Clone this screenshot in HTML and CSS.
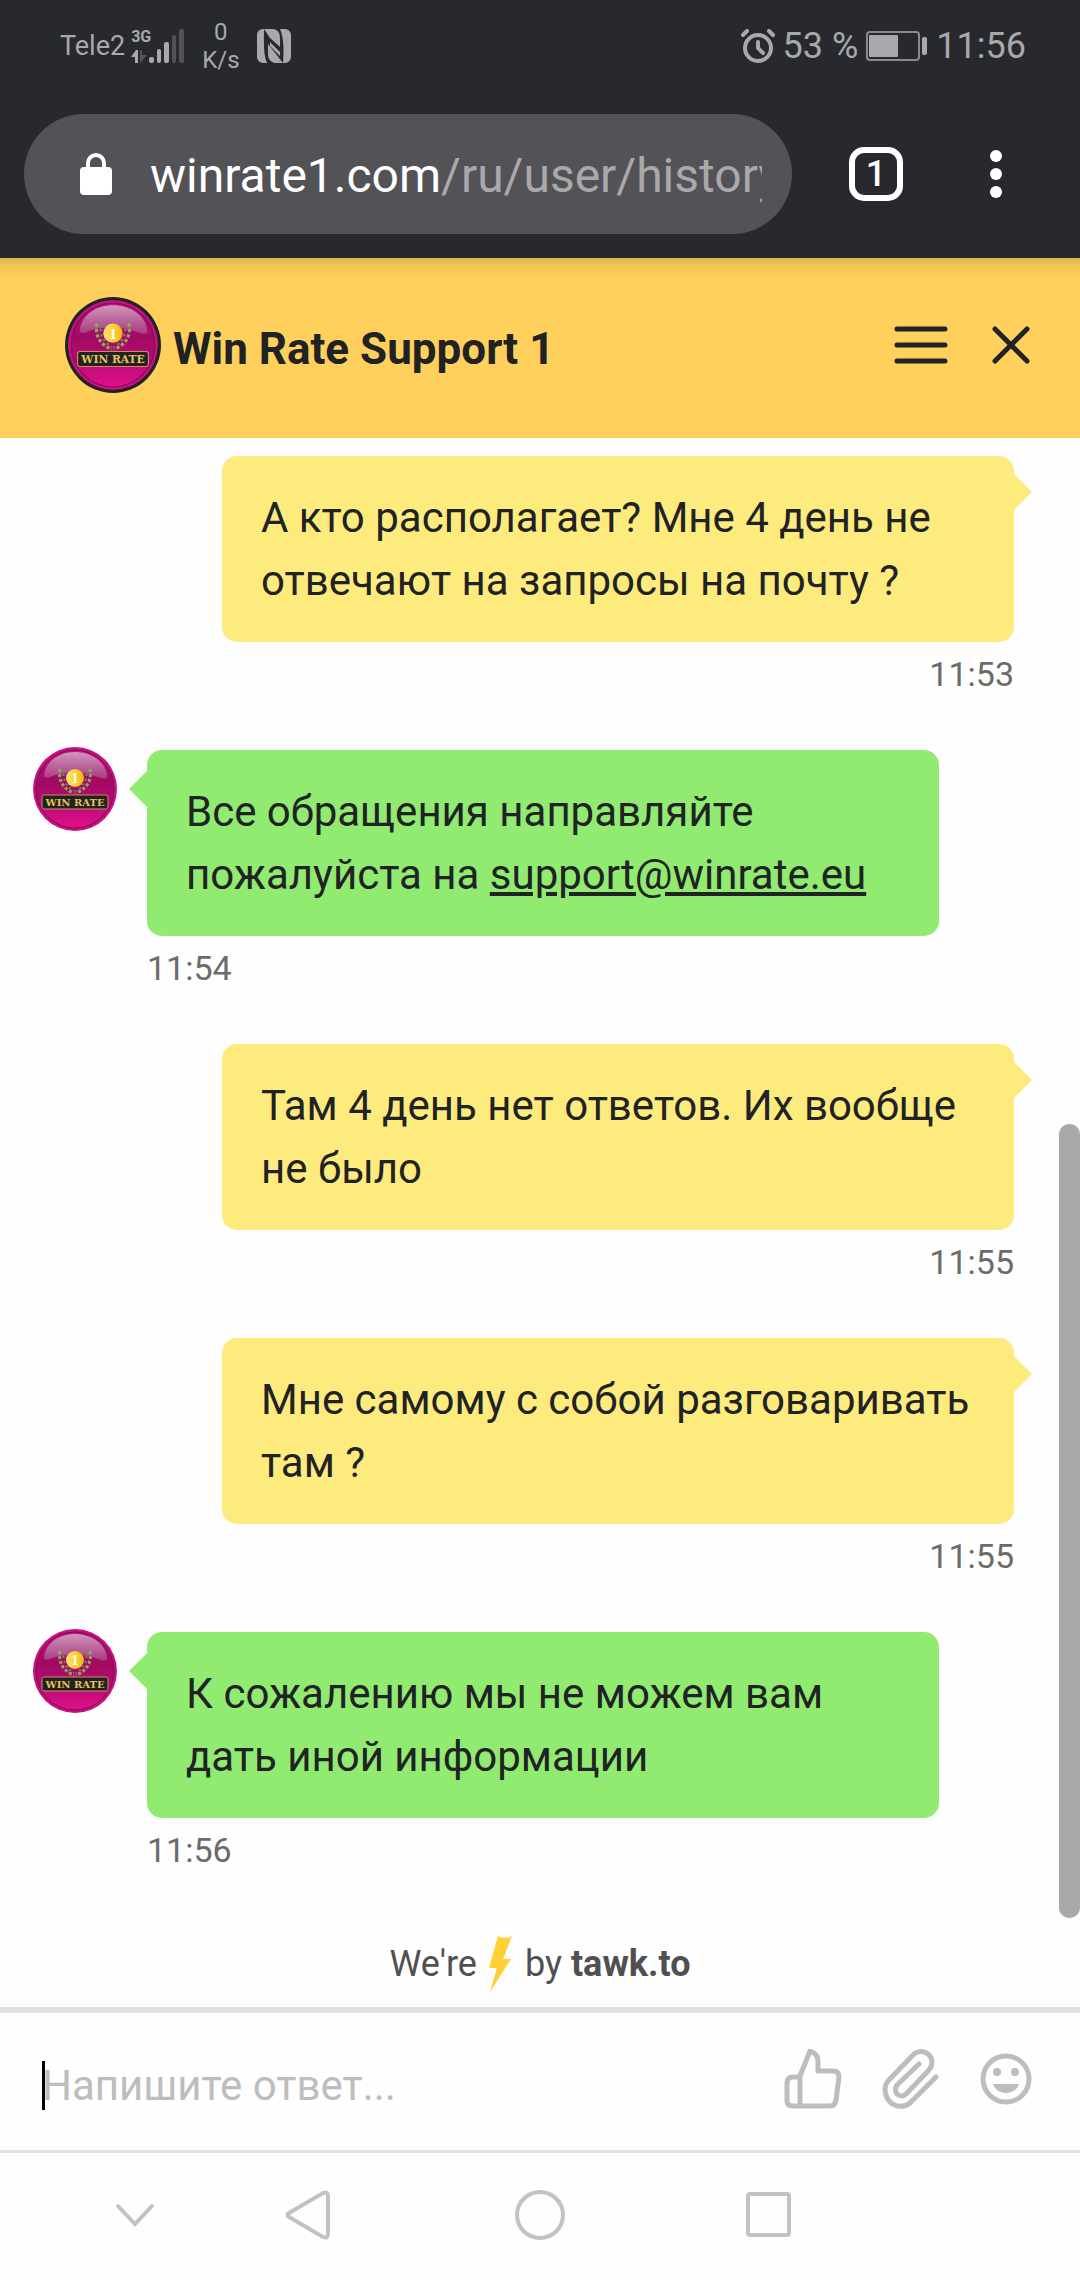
FILE: index.html
```html
<!DOCTYPE html>
<html lang="ru">
  <head>
    <meta charset="UTF-8">
    <meta name="viewport" content="width=device-width, initial-scale=1.0">
    <title>Win Rate Support 1</title>
    <link rel="stylesheet" href="styles.css">
  </head>
  <body>
    <!-- shared logo -->
    <svg class="defs" aria-hidden="true">
      <defs>
        <linearGradient id="pink" x1="0" y1="0" x2="0" y2="1">
          <stop offset="0" stop-color="#c2127f"/>
          <stop offset="0.4" stop-color="#a00a63"/>
          <stop offset="0.7" stop-color="#b80b74"/>
          <stop offset="1" stop-color="#e30f8c"/>
        </linearGradient>
        <linearGradient id="shine" x1="0" y1="0" x2="0" y2="1">
          <stop offset="0" stop-color="#cf95bb"/>
          <stop offset="1" stop-color="#a93b80"/>
        </linearGradient>
        <linearGradient id="gold" x1="0" y1="0" x2="1" y2="0">
          <stop offset="0" stop-color="#fbe27a"/>
          <stop offset="0.5" stop-color="#fcd62e"/>
          <stop offset="1" stop-color="#efb21c"/>
        </linearGradient>
        <symbol id="logo" viewBox="0 0 84 84">
          <circle cx="42" cy="42" r="42" fill="#c5107f"/>
          <circle cx="42" cy="42" r="39" fill="url(#pink)" stroke="#7d0a50" stroke-width="1"/>
          <path d="M11 28C13 14 26 5 42 5s30 9 32 23c1 4-3 4-6 3-9-3-15-5-26-5s-18 1-25 4c-3 1-6 1-6-2z" fill="url(#shine)"/>
          <g fill="none" stroke="#8dab5c" stroke-width="3" stroke-dasharray="3 2">
            <path d="M27 22c-2 11 3 20 14 24"/>
            <path d="M57 22c2 11-3 20-14 24"/>
          </g>
          <g fill="none" stroke="#6d9455" stroke-width="2" stroke-dasharray="2 3">
            <path d="M31 22c-2 10 2 17 10 22"/>
            <path d="M53 22c2 10-2 17-10 22"/>
          </g>
          <circle cx="42" cy="31" r="9" fill="url(#gold)"/>
          <text x="42" y="36" text-anchor="middle" class="logonum">1</text>
          <rect x="9" y="48" width="66" height="14" rx="2" fill="#222220" stroke="#d48a63" stroke-width="1"/>
          <text x="42" y="59" text-anchor="middle" class="logoname">WIN RATE</text>
        </symbol>
      </defs>
    </svg>

    <div class="phone">
      <div class="statusbar">
        <div class="statusleft">
          <span class="carrier">Tele2</span>
          <div class="signal">
            <span class="network">3G</span>
            <svg width="54" height="34" viewBox="0 0 54 34">
              <path d="M0 28l5-7h2v13H4v-6z" fill="#a9a9ac"/>
              <path d="M9 21h2v5h5l-5 6-2 2z" fill="#535359"/>
              <g fill="#a9a9ac">
                <rect x="18" y="28" width="5" height="6" rx="2"/>
                <rect x="26" y="20" width="4" height="14" rx="2"/>
                <rect x="33" y="13" width="5" height="21" rx="2"/>
              </g>
              <g fill="#515156">
                <rect x="41" y="6" width="4" height="28" rx="2"/>
                <rect x="48" y="0" width="5" height="34" rx="2"/>
              </g>
            </svg>
          </div>
          <div class="speed">0<br>K/s</div>
          <svg width="34" height="34" viewBox="0 0 34 34">
            <path d="M6 0H7C7 10 6 25 10 34H6a6 6 0 0 1-6-6V6a6 6 0 0 1 6-6z" fill="#a9a9ac"/>
            <path d="M7 0h9c6 1 7 5 7 10v8L13 9zM11 15l15 19h-8c-5-1-7-5-7-9zM13 13l10 10v4L13 17z" fill="#a9a9ac"/>
            <path d="M23 0h5a6 6 0 0 1 6 6v22a6 6 0 0 1-6 6h-2C27 23 27 9 23 0z" fill="#a9a9ac"/>
          </svg>
        </div>
        <div class="statusright">
          <svg width="34" height="34" viewBox="0 0 34 34" fill="none" stroke="#a9a9ac" stroke-width="4" stroke-linecap="round">
            <circle cx="17" cy="19" r="13"/>
            <path d="M17 13v6l5 5M2 6l4-4M32 6l-4-4"/>
          </svg>
          <span>53 %</span>
          <svg class="battery" width="62" height="30" viewBox="0 0 62 30">
            <rect x="1" y="1" width="52" height="28" rx="3" fill="none" stroke="#8b8b8e" stroke-width="2"/>
            <rect x="3" y="4" width="29" height="22" rx="1" fill="#a9a9ac"/>
            <rect x="56" y="6" width="5" height="18" rx="2" fill="#a9a9ac"/>
          </svg>
          <span>11:56</span>
        </div>
      </div>

      <div class="browserbar">
        <div class="address">
          <svg width="32" height="42" viewBox="0 0 32 42">
            <path d="M8 16V10a8 8 0 0 1 16 0v6" fill="none" stroke="#fff" stroke-width="4"/>
            <rect x="0" y="14" width="32" height="28" rx="4" fill="#fff"/>
          </svg>
          <div class="url">winrate1.com<span class="path">/ru/user/history</span></div>
        </div>
        <button class="tabs" type="button" aria-label="Tabs">1</button>
        <button class="dots" type="button" aria-label="More">
          <svg width="12" height="48" viewBox="0 0 12 48" fill="#fff">
            <circle cx="6" cy="6" r="6"/>
            <circle cx="6" cy="24" r="6"/>
            <circle cx="6" cy="42" r="6"/>
          </svg>
        </button>
      </div>

      <div class="header">
        <svg class="headerlogo"><use href="#logo"/></svg>
        <h1 class="title">Win Rate Support 1</h1>
        <button class="iconbutton" type="button" aria-label="Menu">
          <svg width="54" height="38" viewBox="0 0 54 38" stroke="#212224" stroke-width="5" stroke-linecap="round">
            <path d="M3 3h48M3 19h48M3 35h48"/>
          </svg>
        </button>
        <button class="iconbutton" type="button" aria-label="Close">
          <svg width="38" height="38" viewBox="0 0 38 38" stroke="#212224" stroke-width="5" stroke-linecap="round">
            <path d="M3 3l32 32M35 3L3 35"/>
          </svg>
        </button>
      </div>

      <div class="chat">
        <div class="message mine">
          <div class="bubble">А кто располагает? Мне 4 день не отвечают на запросы на почту ?</div>
          <div class="time">11:53</div>
        </div>
        <div class="message theirs">
          <svg class="avatar"><use href="#logo"/></svg>
          <div class="bubble">Все обращения направляйте пожалуйста на <a href="mailto:support@winrate.eu">support@winrate.eu</a></div>
          <div class="time">11:54</div>
        </div>
        <div class="message mine">
          <div class="bubble">Там 4 день нет ответов. Их вообще не было</div>
          <div class="time">11:55</div>
        </div>
        <div class="message mine">
          <div class="bubble">Мне самому с собой разговаривать там ?</div>
          <div class="time">11:55</div>
        </div>
        <div class="message theirs">
          <svg class="avatar"><use href="#logo"/></svg>
          <div class="bubble">К сожалению мы не можем вам дать иной информации</div>
          <div class="time">11:56</div>
        </div>
        <div class="scrollbar"></div>
      </div>

      <div class="powered">
        <span>We're</span>
        <svg width="24" height="56" viewBox="0 0 24 56">
          <path d="M9 0q6 4 14 0l-9 23h8L1 56l7-24H0z" fill="#ffcf33"/>
        </svg>
        <span>by <b>tawk.to</b></span>
      </div>

      <div class="reply">
        <div class="field">
          <input type="text" placeholder="Напишите ответ..." aria-label="Напишите ответ">
          <span class="caret"></span>
        </div>
        <button class="iconbutton" type="button" aria-label="Like">
          <svg width="58" height="60" viewBox="0 0 58 60" fill="none" stroke="#bdbdbd" stroke-width="5" stroke-linejoin="round">
            <path d="M16 28H9q-6 0-6 6v18q0 5 6 5h37q5 0 6-6l3-23q0-6-6-6H34V12q0-7-8-10L16 27v30"/>
          </svg>
        </button>
        <button class="iconbutton" type="button" aria-label="Attach">
          <svg width="58" height="60" viewBox="0 0 58 60" fill="none" stroke="#bdbdbd" stroke-width="5" stroke-linecap="round">
            <path d="M54 28L28 54C22 59 13 58 8 53S1 38 6 32L30 7C34 2 41 1 46 5S51 16 47 21L24 45C21 48 17 47 15 45S13 39 15 36L37 15"/>
          </svg>
        </button>
        <button class="iconbutton" type="button" aria-label="Emoji">
          <svg width="52" height="52" viewBox="0 0 52 52" fill="#bdbdbd">
            <circle cx="26" cy="26" r="23" fill="none" stroke="#bdbdbd" stroke-width="5"/>
            <circle cx="17" cy="19" r="4"/>
            <circle cx="35" cy="19" r="4"/>
            <path d="M13 31h26c-4 12-22 12-26 0z"/>
          </svg>
        </button>
      </div>

      <div class="navbar">
        <button class="navbutton" type="button" aria-label="Hide">
          <svg width="54" height="54" viewBox="0 0 54 54"><path d="M10 18l17 18 17-18"/></svg>
        </button>
        <div class="navmain">
          <button class="navbutton" type="button" aria-label="Back">
            <svg width="54" height="54" viewBox="0 0 54 54"><path d="M7 25L41 5q5-2 5 3v38q0 5-5 3L7 29q-3-2 0-4z"/></svg>
          </button>
          <button class="navbutton" type="button" aria-label="Home">
            <svg width="54" height="54" viewBox="0 0 54 54"><circle cx="27" cy="27" r="23"/></svg>
          </button>
          <button class="navbutton" type="button" aria-label="Recent">
            <svg width="54" height="54" viewBox="0 0 54 54"><rect x="4" y="6" width="41" height="41" rx="2"/></svg>
          </button>
        </div>
      </div>
    </div>
  </body>
</html>
```

FILE: styles.css
```css
* {
  box-sizing: border-box;
}
body {
  margin: 0;
  font-family: Roboto, "Noto Sans", sans-serif;
  background-color: #fefefe;
  color: #212224;
}
svg {
  display: block;
  flex-shrink: 0;
}
button {
  display: flex;
  align-items: center;
  justify-content: center;
  padding: 0;
  border: none;
  background: none;
  font-family: inherit;
  cursor: pointer;
}
.defs {
  position: absolute;
  width: 0;
  height: 0;
}
.logonum {
  font: bold 14px "Liberation Serif", serif;
  fill: #ffffff;
}
.logoname {
  font: bold 10px "DejaVu Serif", serif;
  fill: #e5c458;
}
.phone {
  display: flex;
  flex-direction: column;
  min-height: 100vh;
}

/* Status bar */
.statusbar {
  display: flex;
  justify-content: space-between;
  align-items: center;
  height: 92px;
  padding: 0 54px 0 60px;
  background-color: #28292e;
  color: #a9a9ac;
}
.statusleft,
.statusright {
  display: flex;
  align-items: center;
}
.statusright {
  gap: 8px;
  font-size: 36px;
}
.carrier {
  font-size: 27px;
}
.signal {
  position: relative;
  margin-left: 6px;
}
.network {
  position: absolute;
  top: 0;
  left: 0;
  font: bold 16px/16px "Liberation Sans Narrow", Roboto, sans-serif;
}
.speed {
  margin: 0 17px;
  font-size: 24px;
  line-height: 28px;
  text-align: center;
}

/* Browser bar */
.browserbar {
  display: flex;
  align-items: center;
  height: 166px;
  padding: 0 66px 2px 24px;
  background-color: #28292e;
  color: #ffffff;
}
.address {
  display: flex;
  flex: 1;
  align-items: center;
  gap: 38px;
  min-width: 0;
  height: 120px;
  padding: 0 30px 0 56px;
  border-radius: 60px;
  background-color: #535257;
}
.url {
  overflow: hidden;
  padding-top: 3px;
  white-space: nowrap;
  font-size: 48px;
  line-height: 60px;
}
.path {
  color: #a9a9ac;
}
.tabs {
  width: 54px;
  height: 54px;
  margin-left: 57px;
  border: 6px solid #ffffff;
  border-radius: 15px;
  color: #ffffff;
  font-size: 36px;
  font-weight: 500;
}
.dots {
  width: 36px;
  margin-left: 75px;
}

/* Chat header */
.header {
  display: flex;
  align-items: center;
  gap: 44px;
  height: 180px;
  padding: 0 50px 6px 65px;
  background: linear-gradient(#dab450, #f4c858 8px, #ffd15c 24px);
}
.headerlogo {
  width: 96px;
  height: 96px;
  padding: 3px;
  border-radius: 50%;
  background-color: #212224;
}
.title {
  flex: 1;
  margin: 8px 0 0 -32px;
  font-size: 44px;
  line-height: 54px;
  font-weight: 700;
}

/* Messages */
.chat {
  position: relative;
  display: flex;
  flex: 1;
  flex-direction: column;
  gap: 56px;
  padding: 18px 66px 48px 33px;
}
.message {
  position: relative;
}
.mine {
  margin-left: 189px;
}
.theirs {
  margin-left: 114px;
  margin-right: 75px;
}
.avatar {
  position: absolute;
  top: -3px;
  left: -114px;
  width: 84px;
  height: 84px;
}
.bubble {
  position: relative;
  padding: 30px 39px;
  border-radius: 15px;
  font-size: 42px;
  line-height: 63px;
}
.bubble a {
  color: inherit;
}
.mine .bubble {
  background-color: #feeb7e;
}
.theirs .bubble {
  background-color: #90eb70;
}
.bubble::after {
  content: "";
  position: absolute;
  border: 18px solid transparent;
}
.mine .bubble::after {
  top: 18px;
  left: 100%;
  border-left-color: #feeb7e;
  border-right-width: 0;
}
.theirs .bubble::after {
  top: 21px;
  right: 100%;
  border-right-color: #90eb70;
  border-left-width: 0;
}
.time {
  margin-top: 12px;
  font-size: 34px;
  line-height: 40px;
  color: #6b6b6b;
}
.mine .time {
  text-align: right;
}
.scrollbar {
  position: absolute;
  right: 0;
  bottom: 0;
  width: 21px;
  height: 794px;
  border-radius: 10px;
  background-color: #a9a9a9;
}

.powered {
  display: flex;
  align-items: center;
  justify-content: center;
  gap: 12px;
  padding: 18px 0 15px;
  font-size: 36px;
  line-height: 56px;
  color: #505050;
}

/* Reply box */
.reply {
  display: flex;
  align-items: center;
  gap: 40px;
  height: 146px;
  padding: 0 48px 6px 42px;
  border-top: 6px solid #e0e0e0;
  border-bottom: 3px solid #e0e0e0;
}
.field {
  position: relative;
  flex: 1;
  margin-top: 14px;
}
.field input {
  display: block;
  width: 100%;
  height: 50px;
  padding: 0;
  border: none;
  outline: none;
  background: none;
  font-family: inherit;
  font-size: 42px;
}
.field input::placeholder {
  color: #bdbdbd;
}
.caret {
  position: absolute;
  top: 0;
  left: 0;
  width: 3px;
  height: 49px;
  background-color: #000000;
}

/* System navigation */
.navbar {
  display: grid;
  grid-template-columns: 25% 50% 25%;
  height: 127px;
  padding-bottom: 4px;
  align-items: center;
}
.navbar > .navbutton {
  justify-self: center;
}
.navmain {
  display: flex;
  justify-content: space-between;
  padding: 0 12px;
}
.navbutton svg {
  fill: none;
  stroke: #c2c2c2;
  stroke-width: 4px;
  stroke-linecap: round;
}
```
